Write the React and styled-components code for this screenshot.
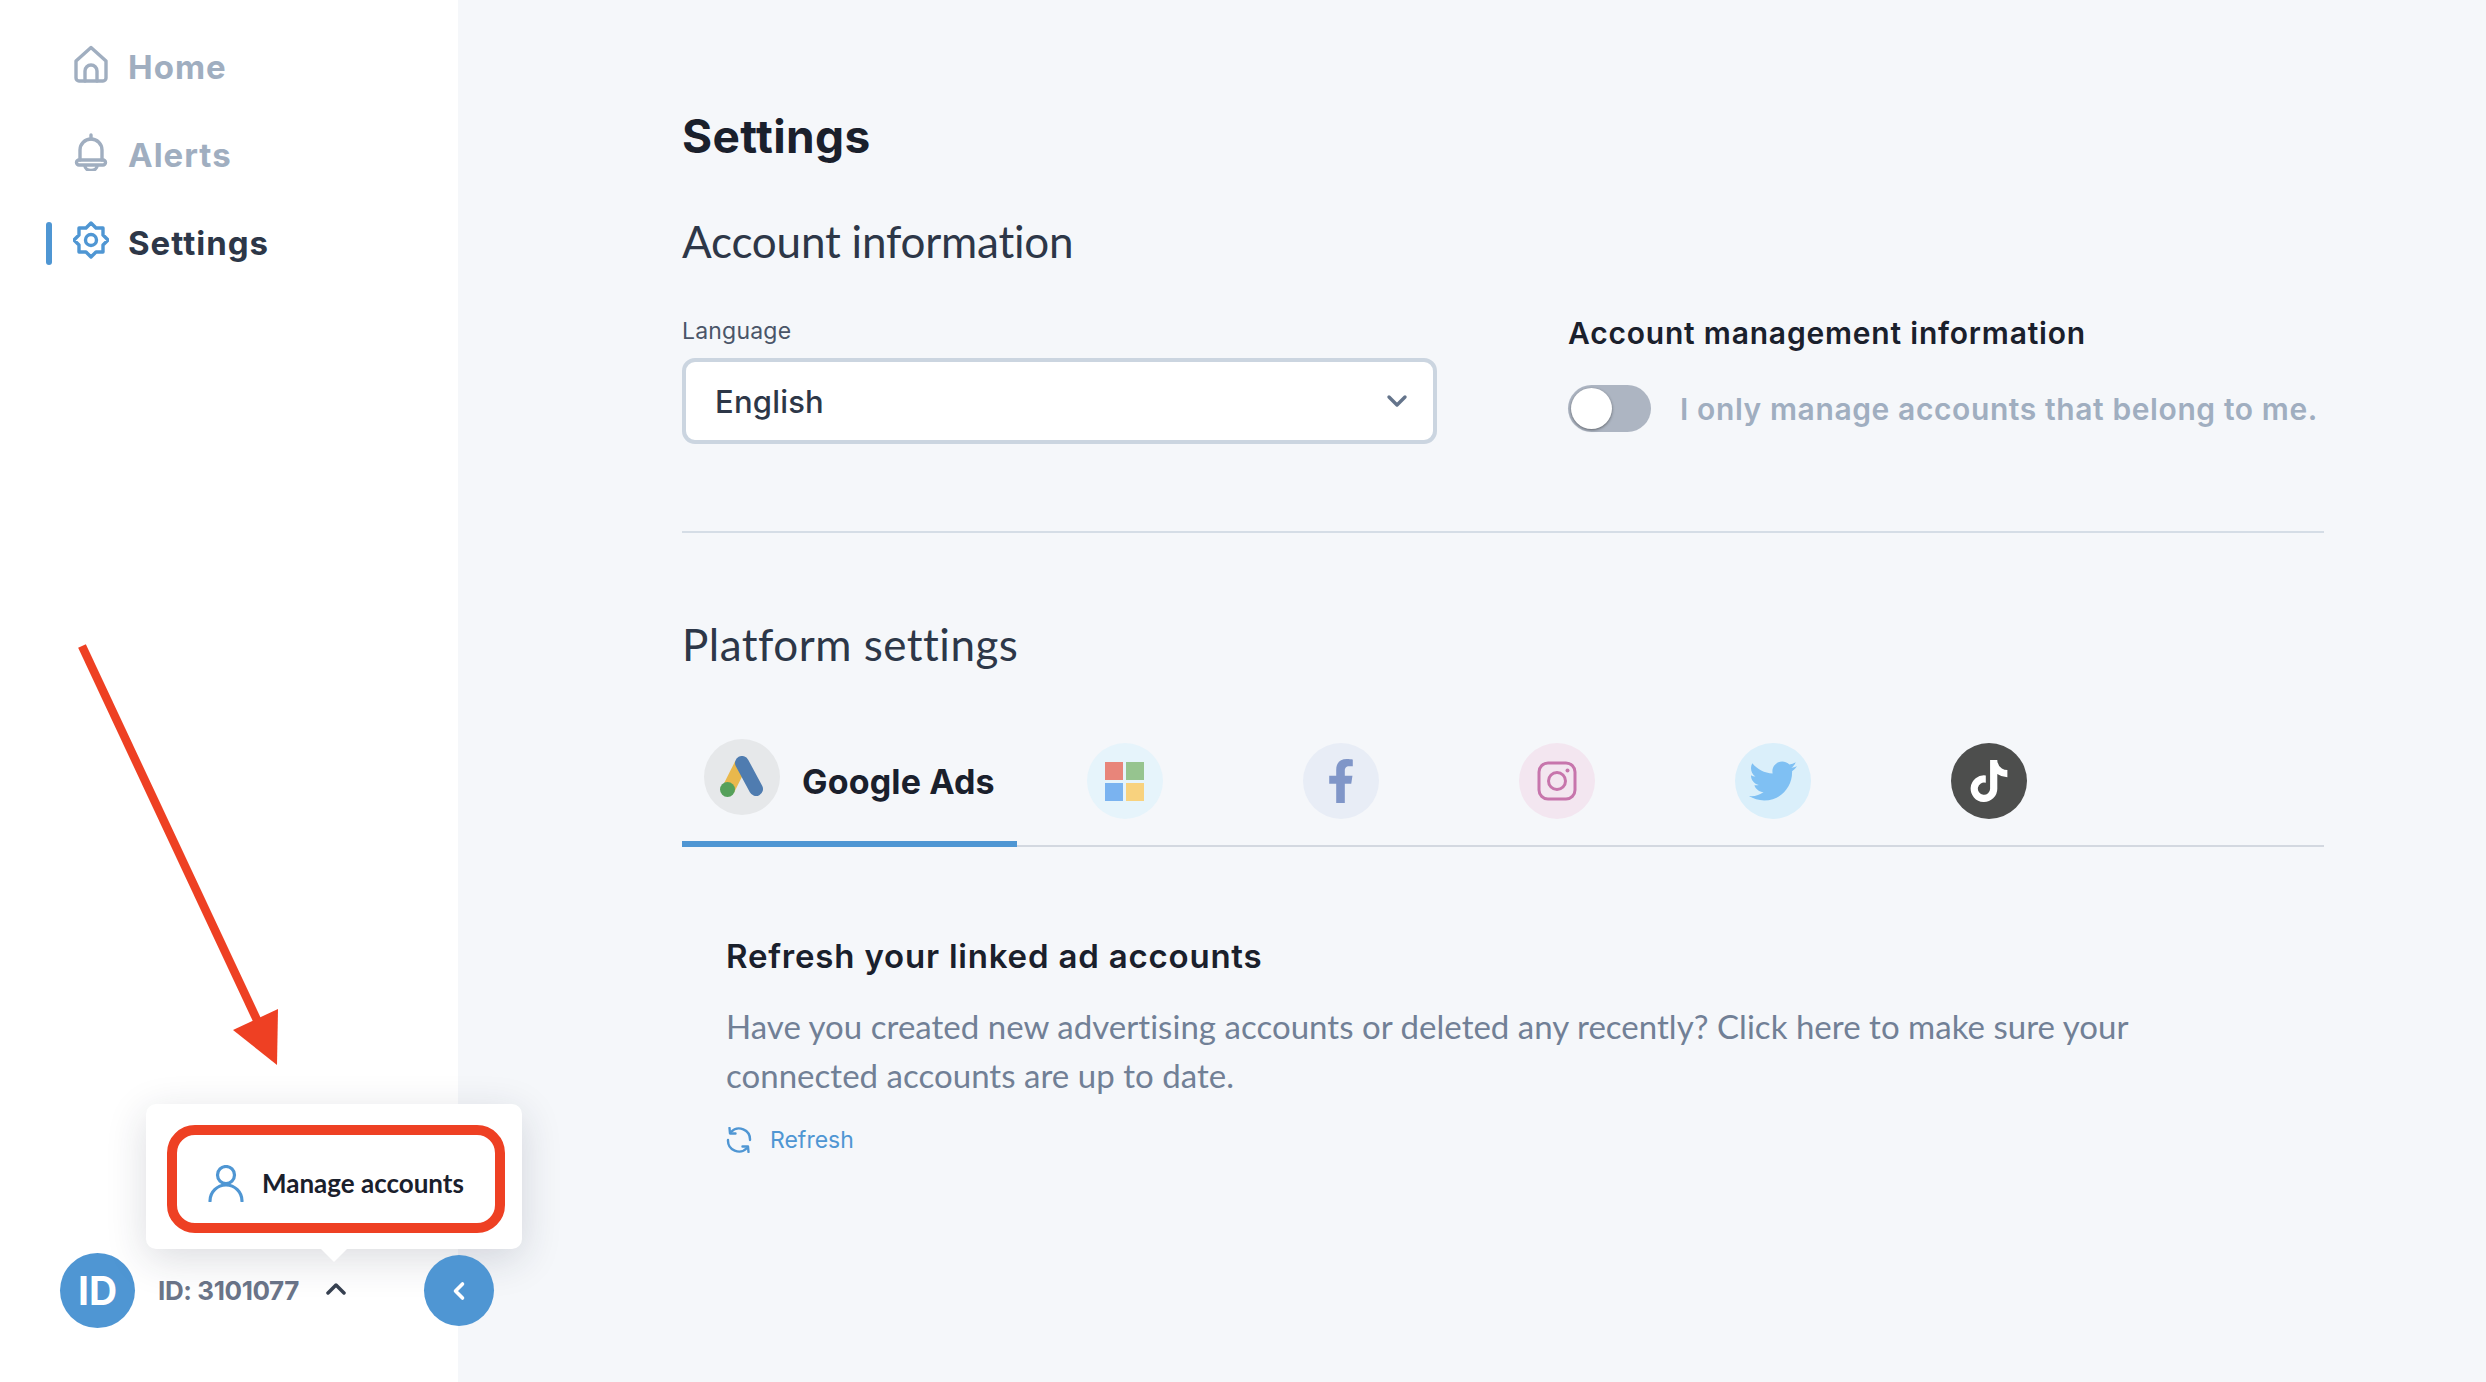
import React from 'react';
import styled, { createGlobalStyle } from 'styled-components';
import { FaFacebookF, FaTwitter, FaTiktok } from 'react-icons/fa';

const HEAD = '"Inter", "Liberation Sans", sans-serif';
const BODY = '"Lato", "Open Sans", sans-serif';

const Global = createGlobalStyle`
  html, body { margin: 0; padding: 0; background: #f5f7fa; }
  * { box-sizing: border-box; }
`;

const Page = styled.div`
  display: flex;
  width: 2486px;
  height: 1382px;
  overflow: hidden;
  background: #f5f7fa;
`;

const Sidebar = styled.aside`
  position: relative;
  flex: 0 0 458px;
  display: flex;
  flex-direction: column;
  justify-content: space-between;
  background: #fff;
  padding: 45px 0 54px 46px;
`;

const Nav = styled.nav`
  display: flex;
  flex-direction: column;
  gap: 44px;
`;

const NavItem = styled.a`
  display: flex;
  align-items: center;
  height: 44px;
  font: 700 33px/44px ${HEAD};
  letter-spacing: 1px;
  color: ${p => (p.$active ? '#2d3748' : '#a0aec0')};
`;

const NavBar = styled.span`
  width: 6px;
  height: 43px;
  border-radius: 3px;
  margin-right: 21px;
  background: ${p => (p.$active ? '#4f96d3' : 'transparent')};
`;

const NavIcon = styled.svg`
  width: 36px;
  height: 38px;
  margin-right: 19px;
  margin-top: -6px;
  fill: none;
  stroke: ${p => (p.$active ? '#4f96d3' : '#a0aec0')};
  stroke-width: 3.4;
  stroke-linejoin: round;
  stroke-linecap: round;
`;

const Account = styled.div`
  display: flex;
  align-items: center;
  padding-left: 14px;
`;

const Avatar = styled.div`
  width: 75px;
  height: 75px;
  border-radius: 50%;
  background: #4f96d3;
  color: #fff;
  display: flex;
  align-items: center;
  justify-content: center;
  font: 700 39px ${HEAD};
`;

const AccountId = styled.span`
  margin-left: 23px;
  font: 700 26px ${HEAD};
  letter-spacing: -0.4px;
  color: #6b7589;
`;

const Chevron = styled.svg`
  width: 20px;
  height: 13px;
  margin-left: 27px;
  margin-top: -4px;
  fill: none;
  stroke: #374151;
  stroke-width: 3.5;
  stroke-linecap: round;
  stroke-linejoin: round;
`;

const Popover = styled.div`
  position: absolute;
  left: 146px;
  top: 1104px;
  width: 376px;
  height: 145px;
  padding: 21px 17px 16px 21px;
  background: #fff;
  border-radius: 10px;
  box-shadow: 0 10px 40px rgba(30, 40, 60, 0.16);
  z-index: 5;
  &::after {
    content: '';
    position: absolute;
    left: 175px;
    bottom: -13px;
    width: 26px;
    height: 13px;
    background: #fff;
    clip-path: polygon(0 0, 100% 0, 50% 100%);
  }
`;

const Highlight = styled.div`
  display: flex;
  align-items: center;
  width: 338px;
  height: 108px;
  padding: 8px 0 0 31px;
  border: 10px solid #ee4023;
  border-radius: 28px;
`;

const MenuLabel = styled.span`
  margin-left: 18px;
  font: 700 26px ${BODY};
  color: #1a202c;
`;

const CollapseButton = styled.button`
  position: absolute;
  left: 424px;
  top: 1255px;
  width: 70px;
  height: 71px;
  border: 0;
  border-radius: 50%;
  background: #4f96d3;
  display: flex;
  align-items: center;
  justify-content: center;
  z-index: 6;
`;

const Arrow = styled.svg`
  position: absolute;
  left: 70px;
  top: 635px;
  width: 220px;
  height: 440px;
  z-index: 4;
`;

const Main = styled.main`
  flex: 1;
  padding: 111px 162px 0 224px;
`;

const Title = styled.h1`
  margin: 0;
  font: 700 46px/50px ${HEAD};
  letter-spacing: 0.4px;
  color: #1a202c;
`;

const SectionTitle = styled.h2`
  margin: ${p => p.$top || 0}px 0 0;
  font: 400 44px/56px ${BODY};
  letter-spacing: ${p => p.$spacing || 0}px;
  color: #2d3748;
`;

const AccountRow = styled.div`
  display: flex;
  margin-top: 47px;
  padding-bottom: 87px;
  border-bottom: 2px solid #d5dde6;
`;

const Field = styled.div`
  width: 755px;
  margin-right: 131px;
`;

const FieldLabel = styled.label`
  display: block;
  font: 400 23px/30px ${HEAD};
  letter-spacing: 0.2px;
  color: #4a5568;
  margin-bottom: 12px;
`;

const Select = styled.div`
  display: flex;
  align-items: center;
  justify-content: space-between;
  height: 86px;
  padding: 0 25px 0 29px;
  background: #fff;
  border: 4px solid #cbd5e0;
  border-radius: 13px;
  font: 500 31px ${HEAD};
  letter-spacing: 0.2px;
  color: #2d3748;
`;

const Management = styled.div`
  margin-top: -3px;
`;

const ManagementTitle = styled.h3`
  margin: 0 0 32px;
  font: 600 30px/40px ${HEAD};
  letter-spacing: 0.8px;
  color: #1a202c;
`;

const ToggleRow = styled.div`
  display: flex;
  align-items: center;
  gap: 29px;
`;

const Toggle = styled.div`
  position: relative;
  width: 83px;
  height: 47px;
  border-radius: 24px;
  background: #adb5c2;
  &::after {
    content: '';
    position: absolute;
    left: 3px;
    top: 3px;
    width: 41px;
    height: 41px;
    border-radius: 50%;
    background: #fff;
    box-shadow: 0 1px 3px rgba(0, 0, 0, 0.45);
  }
`;

const ToggleLabel = styled.span`
  font: 600 30px/40px ${HEAD};
  letter-spacing: 0.6px;
  color: #a0aec0;
`;

const PlatformBlock = styled.section`
  margin-top: 83px;
`;

const Tabs = styled.div`
  display: flex;
  margin-top: 67px;
  height: 108px;
  border-bottom: 2px solid #d3d8e0;
`;

const Tab = styled.div`
  display: flex;
  align-items: flex-start;
  height: 108px;
  margin-bottom: -2px;
  padding: ${p => (p.$active ? '0 22px' : '4px 70px 0')};
  border-bottom: ${p => (p.$active ? '6px solid #4f96d3' : '0')};
`;

const TabCircle = styled.div`
  flex: 0 0 76px;
  width: 76px;
  height: 76px;
  border-radius: 50%;
  display: flex;
  align-items: center;
  justify-content: center;
  background: ${p => p.$bg};
  color: ${p => p.$fg};
`;

const TabLabel = styled.span`
  margin-left: 22px;
  font: 700 34px/86px ${HEAD};
  letter-spacing: 0.15px;
  color: #1a202c;
`;

const MsGrid = styled.div`
  display: grid;
  grid-template-columns: 18px 18px;
  grid-auto-rows: 18px;
  gap: 3px;
`;

const MsCell = styled.i`
  display: block;
  background: ${p => p.$c};
`;

const RefreshBlock = styled.section`
  margin-top: 87px;
  padding-left: 44px;
`;

const RefreshTitle = styled.h3`
  margin: 0;
  font: 600 33px/44px ${HEAD};
  letter-spacing: 0.8px;
  color: #1a202c;
`;

const RefreshText = styled.p`
  margin: 24px 0 0;
  width: 1440px;
  font: 400 33px/49px ${BODY};
  letter-spacing: 0.03px;
  color: #718096;
`;

const RefreshLink = styled.a`
  display: flex;
  align-items: center;
  gap: 18px;
  margin-top: 24px;
  font: 400 23px/32px ${HEAD};
  color: #4f96d3;
`;

// drawn by hand: the package glyph has a heavier frame than the reference
const InstagramIcon = () => (
  <svg width="40" height="40" viewBox="0 0 40 40" fill="none" stroke="#c775ac" strokeWidth="3">
    <rect x="2" y="2" width="36" height="36" rx="9" />
    <circle cx="20" cy="20" r="8.5" />
    <circle cx="30.5" cy="9.5" r="2" fill="#c775ac" stroke="none" />
  </svg>
);

const TABS = [
  { bg: '#e6f4fb', fg: '#fff', ms: true },
  { bg: '#e8edf6', fg: '#8096c8', Icon: FaFacebookF, size: 44 },
  { bg: '#f3e6f0', fg: '#c775ac', Icon: InstagramIcon },
  { bg: '#daeffa', fg: '#7fc0f3', Icon: FaTwitter, size: 48 },
  { bg: '#4d4e4d', fg: '#fff', Icon: FaTiktok, size: 42 },
];

const App = () => (
  <Page>
    <Global />
    <Sidebar>
      <Nav>
        <NavItem>
          <NavBar />
          <NavIcon viewBox="0 0 36 38">
            <path d="M3 16 L18 2.5 L33 16 V33 a3 3 0 0 1 -3 3 H6 a3 3 0 0 1 -3 -3 Z" />
            <path d="M12 36 V26 a6 6 0 0 1 12 0 V36" />
          </NavIcon>
          Home
        </NavItem>
        <NavItem>
          <NavBar />
          <NavIcon viewBox="0 0 36 38">
            <path d="M18 2 V6" />
            <path d="M7 27 V17 a11 11 0 0 1 22 0 V27" />
            <path d="M6 27 H30 a2.5 2.5 0 0 1 0 5 H6 a2.5 2.5 0 0 1 0 -5 Z" />
            <path d="M12 33 a6 4.5 0 0 0 12 0" />
          </NavIcon>
          Alerts
        </NavItem>
        <NavItem $active>
          <NavBar $active />
          <NavIcon $active viewBox="0 0 36 38">
            <path d="M18 2 L23 7 H30 V14 L35 19 L30 24 V31 H23 L18 36 L13 31 H6 V24 L1 19 L6 14 V7 H13 Z" />
            <circle cx="18" cy="19" r="5.5" />
          </NavIcon>
          Settings
        </NavItem>
      </Nav>
      <Account>
        <Avatar>ID</Avatar>
        <AccountId>ID: 3101077</AccountId>
        <Chevron viewBox="0 0 20 13">
          <path d="M2 11 L10 3 L18 11" />
        </Chevron>
      </Account>
      <Arrow viewBox="0 0 220 440">
        <path d="M12 11 L187 385" stroke="#ee4023" strokeWidth="8.5" />
        <path d="M163 395 L208 374 L207 430 Z" fill="#ee4023" />
      </Arrow>
      <Popover>
        <Highlight>
          <svg width="36" height="37" viewBox="0 0 36 37" fill="none" stroke="#4f96d3" strokeWidth="3.2" strokeLinecap="round">
            <circle cx="18" cy="10" r="8.5" />
            <path d="M2 36 a16 16 0 0 1 32 0" />
          </svg>
          <MenuLabel>Manage accounts</MenuLabel>
        </Highlight>
      </Popover>
      <CollapseButton>
        <svg width="14" height="20" viewBox="0 0 14 20" fill="none" stroke="#fff" strokeWidth="3.6" strokeLinecap="round" strokeLinejoin="round">
          <path d="M10.5 3 L3.5 10 L10.5 17" />
        </svg>
      </CollapseButton>
    </Sidebar>
    <Main>
      <Title>Settings</Title>
      <SectionTitle $top={52} $spacing={-0.2}>Account information</SectionTitle>
      <AccountRow>
        <Field>
          <FieldLabel>Language</FieldLabel>
          <Select>
            English
            <svg width="22" height="14" viewBox="0 0 22 14" fill="none" stroke="#64748b" strokeWidth="3.4" strokeLinecap="round" strokeLinejoin="round">
              <path d="M3 3 L11 11 L19 3" />
            </svg>
          </Select>
        </Field>
        <Management>
          <ManagementTitle>Account management information</ManagementTitle>
          <ToggleRow>
            <Toggle />
            <ToggleLabel>I only manage accounts that belong to me.</ToggleLabel>
          </ToggleRow>
        </Management>
      </AccountRow>
      <PlatformBlock>
        <SectionTitle $spacing={0.5}>Platform settings</SectionTitle>
        <Tabs>
          <Tab $active>
            <TabCircle $bg="#e6e8ea">
              <svg width="44" height="42" viewBox="0 0 44 42" fill="none" strokeLinecap="round">
                <path d="M21 8 L8 34" stroke="#e9b84c" strokeWidth="13" strokeLinecap="butt" />
                <path d="M22 7 L36 33" stroke="#4f7cb0" strokeWidth="14" />
                <circle cx="7.5" cy="33.5" r="7.5" fill="#55a05a" />
              </svg>
            </TabCircle>
            <TabLabel>Google Ads</TabLabel>
          </Tab>
          {TABS.map((t, i) => (
            <Tab key={i}>
              <TabCircle $bg={t.bg} $fg={t.fg}>
                {t.ms ? (
                  <MsGrid>
                    <MsCell $c="#e8857a" />
                    <MsCell $c="#96c48f" />
                    <MsCell $c="#7ab3f0" />
                    <MsCell $c="#f8d27e" />
                  </MsGrid>
                ) : (
                  <t.Icon size={t.size} />
                )}
              </TabCircle>
            </Tab>
          ))}
        </Tabs>
      </PlatformBlock>
      <RefreshBlock>
        <RefreshTitle>Refresh your linked ad accounts</RefreshTitle>
        <RefreshText>
          Have you created new advertising accounts or deleted any recently? Click here to make sure your connected accounts are up to date.
        </RefreshText>
        <RefreshLink>
          <svg width="26" height="26" viewBox="0 0 26 26" fill="none" stroke="#4f96d3" strokeWidth="2.4" strokeLinecap="round" strokeLinejoin="round">
            <path d="M5 5 A11 11 0 0 1 24 13" />
            <path d="M21 21 A11 11 0 0 1 2 13" />
            <path d="M3.5 1 L4 6.5 L9.5 6.5" />
            <path d="M22.5 25 L22 19.5 L16.5 19.5" />
          </svg>
          Refresh
        </RefreshLink>
      </RefreshBlock>
    </Main>
  </Page>
);

export default App;
